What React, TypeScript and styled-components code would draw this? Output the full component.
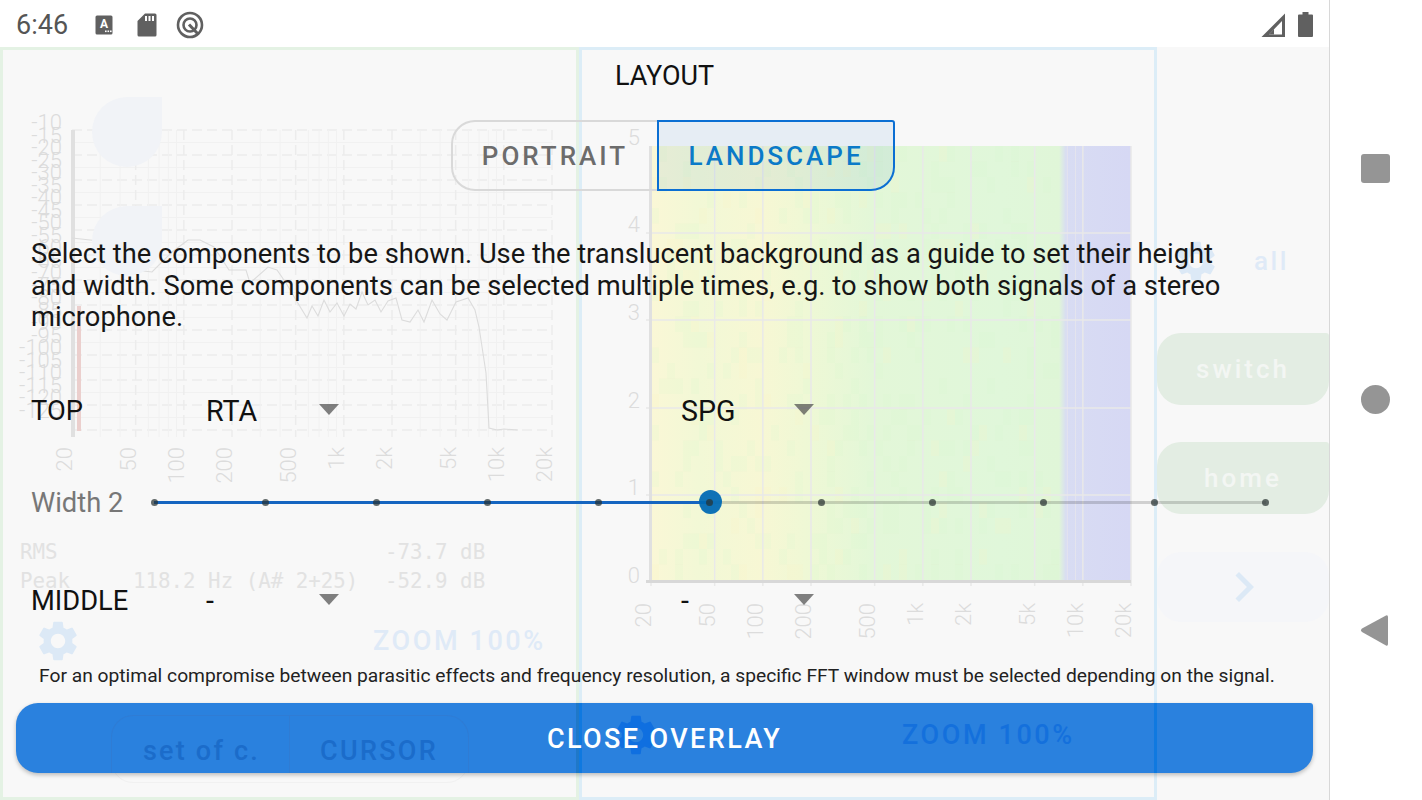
import { FC } from 'react';
import { MdChevronRight, MdSettings } from 'react-icons/md';
import styled, { createGlobalStyle } from 'styled-components';

const GlobalStyle = createGlobalStyle`
  html, body {
    margin: 0;
    padding: 0;
    background: #fff;
    font-family: Roboto, "Liberation Sans", sans-serif;
  }
  * { box-sizing: border-box; }
`;

const Page = styled.div`
  display: flex;
  width: 1422px;
  height: 800px;
  overflow: hidden;
  background: #fff;
`;

const Screen = styled.div`
  display: flex;
  flex-direction: column;
  width: 1330px;
  border-right: 1px solid #d8d8d8;
`;

const StatusBar = styled.div`
  display: flex;
  align-items: center;
  height: 47px;
  padding: 2px 16px 0;
  background: #fff;
`;

const Clock = styled.span`
  width: 79px;
  font-size: 27px;
  color: #555;
`;

const StatusGroup = styled.div<{ $gap: number }>`
  display: flex;
  align-items: center;
  gap: ${({ $gap }) => $gap}px;
`;

const QIcon = styled.svg`
  margin-left: -5px;
`;

const Spacer = styled.div`
  flex: 1;
`;

const NavBar = styled.div`
  flex: 1;
  display: flex;
  flex-direction: column;
  align-items: center;
  padding: 154px 1px 0 0;
  gap: 202px;
`;

const NavSquare = styled.div`
  width: 29px;
  height: 29px;
  border-radius: 3px;
  background: #959595;
`;

const NavCircle = styled.div`
  width: 29px;
  height: 29px;
  border-radius: 50%;
  background: #959595;
`;

const BackIcon = styled.svg`
  margin: -2px 0 0 -2px;
`;

const Content = styled.div`
  position: relative;
  flex: 1;
  background: #f8f8f8;
`;

const Backdrop = styled.div`
  position: absolute;
  inset: 0;
  display: flex;
`;

const Pane = styled.div<{ $width: number; $edge: string }>`
  position: relative;
  width: ${({ $width }) => $width}px;
  height: 753px;
  border: 3px solid ${({ $edge }) => $edge};
`;

const PaneSvg = styled.svg`
  display: block;
`;

const Ghost = styled.text`
  font-family: Roboto, sans-serif;
  font-size: 22px;
  font-weight: 300;
  fill: #dcdcdc;
`;

const RoundKey = styled.div<{ $top: number }>`
  position: absolute;
  left: 89px;
  top: ${({ $top }) => $top}px;
  width: 70px;
  height: 70px;
  border-radius: 50% 0 50% 50%;
  background: #f1f3f7;
`;

const Stats = styled.div`
  position: absolute;
  left: 17px;
  top: 490px;
  display: grid;
  grid-template-columns: 113px 252px auto;
  row-gap: 4px;
  font-family: "DejaVu Sans Mono", monospace;
  font-size: 20.8px;
  line-height: 25px;
  color: #e2e2e2;
  white-space: pre;
`;

const GearHolder = styled.div`
  position: absolute;
  left: 31px;
  top: 567px;
  display: flex;
  color: #dce9f6;
`;

const ZoomText = styled.div`
  position: absolute;
  left: 370px;
  top: 575px;
  font-size: 27px;
  font-weight: 500;
  letter-spacing: 2.6px;
  color: #dfeaf7;
`;

const TabBox = styled.div`
  position: absolute;
  left: 108px;
  top: 665px;
  width: 358px;
  height: 68px;
  border: 1px solid #f1f1f1;
  border-radius: 22px;
`;

const Rail = styled.div`
  flex: 1;
  display: flex;
  flex-direction: column;
  padding-top: 190px;
`;

const RailTop = styled.div`
  display: flex;
  align-items: center;
  height: 48px;
  padding-left: 15px;
  color: #dce9f6;
`;

const AllText = styled.span`
  margin-left: 34px;
  font-size: 26px;
  font-weight: 500;
  letter-spacing: 2.6px;
  color: #dfeaf7;
`;

const RailKey = styled.div<{ $radius: string; $top: number }>`
  display: flex;
  align-items: center;
  justify-content: center;
  height: 72px;
  margin-top: ${({ $top }) => $top}px;
  border-radius: ${({ $radius }) => $radius};
  background: #e3ede3;
  font-size: 26px;
  font-weight: 500;
  letter-spacing: 3px;
  color: #f3f6f3;
`;

const ArrowKey = styled.div`
  display: flex;
  align-items: center;
  justify-content: center;
  height: 70px;
  margin-top: 38px;
  padding-left: 2px;
  border-radius: 24px;
  background: #f5f6f9;
  color: #dce9f6;
`;

const Overlay = styled.div`
  position: absolute;
  inset: 0;
  display: flex;
  flex-direction: column;
  color: #111;
`;

const Title = styled.div`
  margin-top: 10px;
  font-size: 27px;
  line-height: 38px;
  text-align: center;
`;

const Toggle = styled.div`
  display: flex;
  height: 71px;
  margin: 25px 0 0 451px;
`;

const ToggleButton = styled.div<{ $active?: boolean }>`
  display: flex;
  align-items: center;
  justify-content: center;
  width: ${({ $active }) => ($active ? 238 : 206)}px;
  padding-top: 1px;
  border: 2px solid ${({ $active }) => ($active ? '#0b6fd3' : '#d9d9d9')};
  border-right-width: ${({ $active }) => ($active ? 2 : 0)}px;
  border-radius: ${({ $active }) => ($active ? '0 3px 24px 0' : '24px 0 0 24px')};
  background: ${({ $active }) => ($active ? 'rgba(25, 118, 210, 0.08)' : 'transparent')};
  font-size: 26px;
  font-weight: 500;
  letter-spacing: 3px;
  color: ${({ $active }) => ($active ? '#0b7ac8' : '#6c6c6c')};
`;

const Lead = styled.p`
  margin: 48px 0 0 31px;
  width: 1200px;
  font-size: 27.3px;
  line-height: 31.7px;
  color: #161616;
`;

const PickerRow = styled.div<{ $top: number }>`
  display: flex;
  align-items: center;
  height: 40px;
  margin: ${({ $top }) => $top}px 0 0 31px;
  font-size: 27.3px;
`;

const RowLabel = styled.div`
  width: 175px;
  color: #111;
`;

const Picker = styled.div`
  display: flex;
  align-items: center;
  width: 475px;
  color: #111;
`;

const PickerValue = styled.span`
  width: 113px;
  font-size: 28.6px;
`;

const PickerArrow = styled.span`
  width: 0;
  height: 0;
  margin-top: -4px;
  border-left: 10px solid transparent;
  border-right: 10px solid transparent;
  border-top: 11px solid rgba(70, 70, 70, 0.68);
`;

const SliderRow = styled.div`
  display: flex;
  align-items: center;
  height: 40px;
  margin: 51px 0 0 31px;
`;

const SliderLabel = styled.div`
  width: 123px;
  padding-top: 2px;
  font-size: 27.3px;
  color: #777;
`;

const Track = styled.div`
  position: relative;
  display: flex;
  align-items: center;
  justify-content: space-between;
  width: 1112px;
  height: 3px;
  background: rgba(0, 0, 0, 0.16);
`;

const TrackFill = styled.div`
  position: absolute;
  left: 0;
  top: 0;
  height: 3px;
  background: #1565c0;
`;

const Stop = styled.span`
  position: relative;
  width: 7px;
  height: 7px;
  margin: 0 -3.5px;
  border-radius: 50%;
  background: rgba(40, 50, 50, 0.72);
`;

const Thumb = styled.span`
  position: absolute;
  top: -11px;
  width: 23px;
  height: 24px;
  margin-left: -11.5px;
  border-radius: 50%;
  background: rgba(0, 105, 180, 0.94);
`;

const Note = styled.div`
  margin: 43px 0 0 39px;
  font-size: 19.24px;
  line-height: 24px;
  color: #222;
  white-space: nowrap;
`;

const CloseButton = styled.div`
  position: relative;
  display: flex;
  align-items: center;
  justify-content: center;
  width: 1297px;
  height: 70px;
  margin: 15px 0 0 16px;
  border-radius: 22px 3px 22px 22px;
  background: #2a81de;
  box-shadow: 0 2px 4px rgba(0, 0, 0, 0.25);
  font-size: 27px;
  font-weight: 500;
  letter-spacing: 2.4px;
  color: #fff;
`;

const CloseLabel = styled.span`
  position: relative;
  top: 1px;
`;

const Strip = styled.span<{ $left: number; $tone: string }>`
  position: absolute;
  left: ${({ $left }) => $left}px;
  top: 0;
  width: 3px;
  height: 70px;
  background: ${({ $tone }) => $tone};
`;

const SunkBox = styled.span`
  position: absolute;
  left: 95px;
  top: 12px;
  width: 358px;
  height: 58px;
  border: 1px solid #2f7cd4;
  border-bottom: 0;
  border-radius: 22px 22px 0 0;
`;

const SunkDivider = styled.span`
  position: absolute;
  left: 273px;
  top: 12px;
  width: 1px;
  height: 58px;
  background: #2f7cd4;
`;

const SunkText = styled.span<{ $left: number; $top: number; $tone: string; $spacing: number }>`
  position: absolute;
  left: ${({ $left }) => $left}px;
  top: ${({ $top }) => $top}px;
  line-height: 34px;
  font-size: 27px;
  letter-spacing: ${({ $spacing }) => $spacing}px;
  color: ${({ $tone }) => $tone};
`;

const SunkGear = styled.span`
  position: absolute;
  left: 596px;
  top: 8px;
  display: flex;
  color: #0f6fe0;
`;

const RTA_FREQ_LABELS: [number, string][] = [
  [20, '20'],
  [50, '50'],
  [100, '100'],
  [200, '200'],
  [500, '500'],
  [1000, '1k'],
  [2000, '2k'],
  [5000, '5k'],
  [10000, '10k'],
  [20000, '20k'],
];
const MINOR_FREQS = [30, 40, 60, 70, 80, 90, 300, 400, 600, 700, 800, 900, 3000, 4000, 6000, 7000, 8000, 9000];
const RTA_CURVE =
  '72,238 108,242 122,262 135,270 152,272 172,252 188,240 200,240 214,247 229,270 246,270 250,283 268,267 277,270 286,283 296,300 307,318 312,306 318,316 324,300 330,312 337,303 344,316 350,304 356,309 362,292 368,305 375,300 381,312 388,301 396,298 402,320 410,322 418,310 424,322 432,300 440,314 447,320 456,302 462,300 468,298 475,310 479,327 486,373 489,428 497,430 504,429 518,430';
const CHANNELS = [0, 1, 2, 3, 4, 5, 6, 7, 8, 9, 10];

const freqX = (f: number, left: number) => left + (480 * Math.log10(f / 20)) / 3;

const RtaChart: FC = () => {
  const hDashed = Array.from({ length: 13 }, (_, i) => 130 + i * 25);
  const labels = Array.from({ length: 24 }, (_, i) => -10 - i * 5);
  return (
    <PaneSvg width={573} height={440} viewBox="3 50 573 440">
      {hDashed.map(y => (
        <g key={y}>
          <line x1={72} x2={552} y1={y} y2={y} stroke="#ececec" strokeWidth={1.5} strokeDasharray="10 5" />
          {y < 430 && <line x1={72} x2={552} y1={y + 12.5} y2={y + 12.5} stroke="#f1f1f1" />}
        </g>
      ))}
      {MINOR_FREQS.map(f => (
        <line key={f} x1={freqX(f, 72)} x2={freqX(f, 72)} y1={130} y2={437} stroke="#f1f1f1" />
      ))}
      {RTA_FREQ_LABELS.map(([f]) => (
        <line key={f} x1={freqX(f, 72)} x2={freqX(f, 72)} y1={130} y2={437} stroke="#ececec" strokeWidth={1.5} strokeDasharray="10 5" />
      ))}
      <rect x={71} y={130} width={4} height={307} fill="#e0e0e0" />
      <rect x={77} y={306} width={4} height={125} fill="#ebcfcd" />
      <polyline points={RTA_CURVE} fill="none" stroke="#dcdcdc" strokeWidth={1.1} />
      {labels.map((v, i) => (
        <Ghost key={v} x={62} y={130 + i * 12.5} textAnchor="end">
          {v}
        </Ghost>
      ))}
      {RTA_FREQ_LABELS.map(([f, label]) => (
        <Ghost key={f} textAnchor="end" transform={`translate(${freqX(f, 72)} 447) rotate(-90)`}>
          {label}
        </Ghost>
      ))}
    </PaneSvg>
  );
};

const heatCells = () => {
  const cells = [];
  for (let c = 0; c < 51; c++) {
    for (let r = 0; r < 28; r++) {
      const n = Math.abs(Math.sin(c * 12.9898 + r * 78.233) * 43758.5453) % 1;
      if (n > 0.7) {
        cells.push(
          <rect
            key={`${c}-${r}`}
            x={651 + c * 8}
            y={146 + r * 15.5}
            width={8}
            height={15.5}
            fill={n > 0.93 ? '#fff0c0' : '#d4f5d0'}
            opacity={0.14}
          />,
        );
      }
    }
  }
  return cells;
};

const SpgChart: FC = () => {
  const rows = [233, 320, 408, 495];
  const scale: [string, number][] = [
    ['5', 145],
    ['4', 232],
    ['3', 320],
    ['2', 408],
    ['1', 495],
    ['0', 583],
  ];
  return (
    <PaneSvg width={572} height={600} viewBox="582 50 572 600">
      <defs>
        <linearGradient id="spg" x1="651" x2="1131" y1="0" y2="0" gradientUnits="userSpaceOnUse">
          <stop offset="0" stopColor="#faf7d6" />
          <stop offset="0.1" stopColor="#f2f8d6" />
          <stop offset="0.23" stopColor="#f7f7d4" />
          <stop offset="0.32" stopColor="#eff8d5" />
          <stop offset="0.46" stopColor="#e3f7d8" />
          <stop offset="0.73" stopColor="#e0f7da" />
          <stop offset="0.85" stopColor="#e0f6d8" />
          <stop offset="0.865" stopColor="#d8dcf3" />
          <stop offset="1" stopColor="#d6d8f4" />
        </linearGradient>
      </defs>
      <rect x={651} y={146} width={480} height={434} fill="url(#spg)" />
      <g>{heatCells()}</g>
      {RTA_FREQ_LABELS.map(([f]) => (
        <line key={f} x1={freqX(f, 651)} x2={freqX(f, 651)} y1={146} y2={586} stroke="#e9e9e9" strokeWidth={1.5} />
      ))}
      {[8000, 9000].map(f => (
        <line key={f} x1={freqX(f, 651)} x2={freqX(f, 651)} y1={146} y2={580} stroke="#e4e4ee" />
      ))}
      {rows.map(y => (
        <line key={y} x1={646} x2={1131} y1={y} y2={y} stroke="#e9e9e9" strokeWidth={1.5} />
      ))}
      <rect x={649} y={146} width={3} height={436} fill="#e0e0e0" />
      <rect x={646} y={580} width={485} height={3} fill="#d8d8d8" />
      {scale.map(([label, y]) => (
        <Ghost key={label} x={640} y={y} textAnchor="end">
          {label}
        </Ghost>
      ))}
      {RTA_FREQ_LABELS.map(([f, label]) => (
        <Ghost key={f} textAnchor="end" transform={`translate(${freqX(f, 651)} 603) rotate(-90)`}>
          {label}
        </Ghost>
      ))}
    </PaneSvg>
  );
};

const StatusIcons: FC = () => (
  <StatusGroup $gap={24}>
    <svg width="18" height="20" viewBox="0 0 18 20">
      <rect x="0.5" y="0.5" width="17" height="19" rx="1.5" fill="#606060" />
      <text x="9" y="13" textAnchor="middle" fontSize="12" fontWeight="700" fontFamily="Roboto" fill="#fff">
        A
      </text>
      <rect x="10" y="15.5" width="1.6" height="1.6" fill="#fff" />
      <rect x="12.5" y="15.5" width="1.6" height="1.6" fill="#fff" />
      <rect x="15" y="15.5" width="1.6" height="1.6" fill="#fff" />
    </svg>
    <svg width="20" height="24" viewBox="0 0 20 24">
      <path d="M8 0.5h10a1.5 1.5 0 0 1 1.5 1.5v20a1.5 1.5 0 0 1-1.5 1.5H2A1.5 1.5 0 0 1 0.5 22V8z" fill="#606060" />
      <rect x="8" y="3" width="2" height="5" fill="#fff" />
      <rect x="11.5" y="3" width="2" height="5" fill="#fff" />
      <rect x="15" y="3" width="2" height="5" fill="#fff" />
    </svg>
    <QIcon width="28" height="28" viewBox="0 0 28 28" fill="none" stroke="#606060">
      <circle cx="14" cy="14" r="12" strokeWidth="2.6" />
      <circle cx="14" cy="14" r="6.5" strokeWidth="2.6" />
      <path d="M13 13.5L22 23" strokeWidth="3" />
    </QIcon>
  </StatusGroup>
);

const ConnectivityIcons: FC = () => (
  <StatusGroup $gap={13}>
    <svg width="24" height="24" viewBox="0 0 24 24">
      <path d="M24 0.5V24H0.5z" fill="#606060" />
      <path d="M21 8V21.5H8z" fill="#fff" />
      <path d="M13 21.5V16L8 21.5z" fill="#606060" />
    </svg>
    <svg width="15" height="25" viewBox="0 0 15 25">
      <path d="M4.5 0h6v2.5H14a1 1 0 0 1 1 1V24a1 1 0 0 1-1 1H1a1 1 0 0 1-1-1V3.5a1 1 0 0 1 1-1h3.5z" fill="#606060" />
    </svg>
  </StatusGroup>
);

const Backlayer: FC = () => (
  <Backdrop>
    <Pane $width={579} $edge="#e4f2e4">
      <RtaChart />
      <RoundKey $top={47} />
      <RoundKey $top={156} />
      <Stats>
        <span>RMS</span>
        <span />
        <span>-73.7 dB</span>
        <span>Peak</span>
        <span>118.2 Hz (A# 2+25)</span>
        <span>-52.9 dB</span>
      </Stats>
      <GearHolder>
        <MdSettings size={48} />
      </GearHolder>
      <ZoomText>ZOOM 100%</ZoomText>
      <TabBox />
    </Pane>
    <Pane $width={578} $edge="#dcedf7">
      <SpgChart />
    </Pane>
    <Rail>
      <RailTop>
        <MdSettings size={48} />
        <AllText>all</AllText>
      </RailTop>
      <RailKey $radius="24px 3px 24px 24px" $top={48}>
        switch
      </RailKey>
      <RailKey $radius="24px 3px 24px 24px" $top={37}>
        home
      </RailKey>
      <ArrowKey>
        <MdChevronRight size={60} />
      </ArrowKey>
    </Rail>
  </Backdrop>
);

const App: FC = () => {
  const value = 5;
  const fillShare = (value / (CHANNELS.length - 1)) * 100;
  return (
    <Page>
      <GlobalStyle />
      <Screen>
        <StatusBar>
          <Clock>6:46</Clock>
          <StatusIcons />
          <Spacer />
          <ConnectivityIcons />
        </StatusBar>
        <Content>
          <Backlayer />
          <Overlay>
            <Title>LAYOUT</Title>
            <Toggle>
              <ToggleButton>PORTRAIT</ToggleButton>
              <ToggleButton $active>LANDSCAPE</ToggleButton>
            </Toggle>
            <Lead>
              Select the components to be shown. Use the translucent background as a guide to set their height and
              width. Some components can be selected multiple times, e.g. to show both signals of a stereo microphone.
            </Lead>
            <PickerRow $top={57}>
              <RowLabel>TOP</RowLabel>
              <Picker>
                <PickerValue>RTA</PickerValue>
                <PickerArrow />
              </Picker>
              <Picker>
                <PickerValue>SPG</PickerValue>
                <PickerArrow />
              </Picker>
            </PickerRow>
            <SliderRow>
              <SliderLabel>Width 2</SliderLabel>
              <Track>
                <TrackFill style={{ width: `${fillShare}%` }} />
                <Thumb style={{ left: `${fillShare}%` }} />
                {CHANNELS.map(c => (
                  <Stop key={c} />
                ))}
              </Track>
            </SliderRow>
            <PickerRow $top={59}>
              <RowLabel>MIDDLE</RowLabel>
              <Picker>
                <PickerValue>-</PickerValue>
                <PickerArrow />
              </Picker>
              <Picker>
                <PickerValue>-</PickerValue>
                <PickerArrow />
              </Picker>
            </PickerRow>
            <Note>
              For an optimal compromise between parasitic effects and frequency resolution, a specific FFT window must be
              selected depending on the signal.
            </Note>
            <CloseButton>
              <SunkBox />
              <SunkDivider />
              <SunkText $left={127} $top={31} $tone="#1b6cca" $spacing={2.2}>
                set of c.
              </SunkText>
              <SunkText $left={304} $top={31} $tone="#1b6cca" $spacing={2.3}>
                CURSOR
              </SunkText>
              <SunkText $left={886} $top={15} $tone="#1470dc" $spacing={2.6}>
                ZOOM 100%
              </SunkText>
              <SunkGear>
                <MdSettings size={48} />
              </SunkGear>
              <Strip $left={560} $tone="#1f78c8" />
              <Strip $left={563} $tone="#0f79e0" />
              <Strip $left={1138} $tone="#0f79e0" />
              <CloseLabel>CLOSE OVERLAY</CloseLabel>
            </CloseButton>
          </Overlay>
        </Content>
      </Screen>
      <NavBar>
        <NavSquare />
        <NavCircle />
        <BackIcon width="29" height="33" viewBox="0 0 29 33">
          <path d="M26 1.5a1.5 1.5 0 0 1 2 1.4v27.2a1.5 1.5 0 0 1-2 1.4L2 18a2 2 0 0 1 0-3.4z" fill="#959595" />
        </BackIcon>
      </NavBar>
    </Page>
  );
};

export default App;
